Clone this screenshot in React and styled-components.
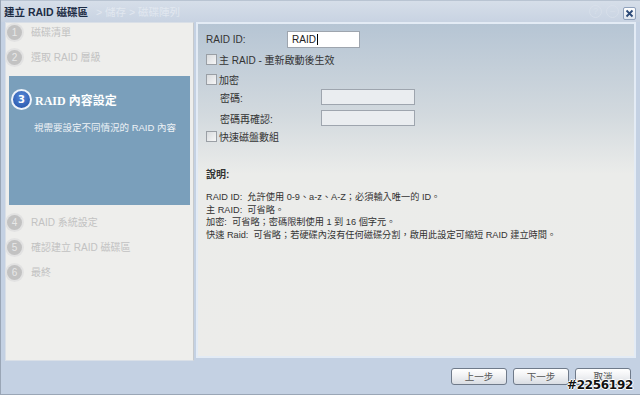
import React from "react";
import styled, { createGlobalStyle } from "styled-components";

const GlobalStyle = createGlobalStyle`
  html, body {
    margin: 0;
    padding: 0;
    background: #c4d1e3;
  }
  body {
    font-family: "Liberation Sans", "Noto Sans CJK TC", sans-serif;
    font-size: 10px;
    color: #333;
  }
`;

const steps = [
  { n: 1, label: "磁碟清單" },
  { n: 2, label: "選取 RAID 層級" },
  { n: 3, label: "RAID 內容設定", desc: "視需要設定不同情況的 RAID 內容", active: true },
  { n: 4, label: "RAID 系統設定" },
  { n: 5, label: "確認建立 RAID 磁碟區" },
  { n: 6, label: "最終" },
];

const notes = [
  "RAID ID:  允許使用 0-9、a-z、A-Z；必須輸入唯一的 ID。",
  "主 RAID:  可省略。",
  "加密:  可省略；密碼限制使用 1 到 16 個字元。",
  "快速 Raid:  可省略；若硬碟內沒有任何磁碟分割，啟用此設定可縮短 RAID 建立時間。",
];

const App = () => {
  return (
    <>
      <GlobalStyle />
      <Window>
        <TitleBar>
          <Title>建立 RAID 磁碟區</Title>
          <Ghost>&gt; 儲存 &gt; 磁碟陣列</Ghost>
          <TitleTools>
            <GhostIcon>?</GhostIcon>
            <GhostIcon>–</GhostIcon>
            <CloseButton>
              <svg width="9" height="9" viewBox="0 0 9 9">
                <path d="M1.5 1.5 L7.5 7.5 M7.5 1.5 L1.5 7.5" stroke="#2c4a78" strokeWidth="1.8" />
              </svg>
            </CloseButton>
          </TitleTools>
        </TitleBar>

        <Body>
          <StepPanel>
            {steps.map((s) =>
              s.active ? (
                <ActiveStep key={s.n}>
                  <ActiveHead>
                    <ActiveBadge>{s.n}</ActiveBadge>
                    <ActiveLabel>{s.label}</ActiveLabel>
                  </ActiveHead>
                  <ActiveDesc>{s.desc}</ActiveDesc>
                </ActiveStep>
              ) : (
                <StepRow key={s.n}>
                  <Badge>{s.n}</Badge>
                  <StepLabel>{s.label}</StepLabel>
                </StepRow>
              )
            )}
          </StepPanel>

          <ContentPanel>
            <FieldRow>
              <Label $width={81}>RAID ID:</Label>
              <TextBox $width={73} $height={17} $white>
                RAID<Caret />
              </TextBox>
            </FieldRow>
            <CheckRow>
              <Check />
              <span>主 RAID - 重新啟動後生效</span>
            </CheckRow>
            <CheckRow>
              <Check />
              <span>加密</span>
            </CheckRow>
            <FieldRow $indent={14} $top={1}>
              <Label $width={101}>密碼:</Label>
              <TextBox $width={94} $height={16} />
            </FieldRow>
            <FieldRow $indent={14} $top={5}>
              <Label $width={101}>密碼再確認:</Label>
              <TextBox $width={94} $height={16} />
            </FieldRow>
            <CheckRow $top={2}>
              <Check />
              <span>快速磁盤數組</span>
            </CheckRow>

            <NoteTitle>說明:</NoteTitle>
            <Notes>
              {notes.map((line) => (
                <NoteLine key={line}>{line}</NoteLine>
              ))}
            </Notes>
          </ContentPanel>
        </Body>

        <Footer>
          <Button>上一步</Button>
          <Button>下一步</Button>
          <Button>取消</Button>
        </Footer>
        <Watermark>#2256192</Watermark>
      </Window>
    </>
  );
};

const Window = styled.div`
  position: relative;
  width: 640px;
  height: 395px;
  box-sizing: border-box;
  display: flex;
  flex-direction: column;
  background: #c4d1e3;
  border-left: 1px solid #9aa6b6;
  border-bottom: 1px solid #9aa6b6;
  overflow: hidden;
`;

const TitleBar = styled.div`
  height: 22px;
  flex: none;
  display: flex;
  align-items: center;
  padding: 0 4px 0 3px;
  background: linear-gradient(#d6dee9, #c8d3e2);
  border-top: 1px solid #b9c4d2;
  box-sizing: border-box;
`;

const Title = styled.div`
  font-weight: bold;
  font-size: 10.5px;
  color: #1d2c44;
  white-space: nowrap;
`;

const Ghost = styled.div`
  margin-left: 8px;
  font-size: 10.5px;
  color: #eef2f7;
  opacity: 0.6;
  white-space: nowrap;
`;

const TitleTools = styled.div`
  margin-left: auto;
  display: flex;
  align-items: center;
  gap: 4px;
`;

const GhostIcon = styled.div`
  width: 11px;
  height: 11px;
  border-radius: 50%;
  border: 1px solid #dbe2ec;
  color: #dbe2ec;
  font-size: 9px;
  line-height: 11px;
  text-align: center;
  opacity: 0.7;
`;

const CloseButton = styled.div`
  width: 11px;
  height: 11px;
  display: flex;
  align-items: center;
  justify-content: center;
  background: linear-gradient(#ffffff, #dfe6ef);
  border: 1px solid #8fa1bb;
  border-radius: 2px;
  margin-top: 4px;
`;

const Body = styled.div`
  height: 339px;
  flex: none;
  display: flex;
  align-items: flex-start;
  gap: 2px;
  padding: 0 3px 0 4px;
`;

const StepPanel = styled.div`
  width: 189px;
  height: 339px;
  box-sizing: border-box;
  background: #eeeeec;
  border: 1px solid #d9dfe7;
  border-right-color: #c6c9cc;
  display: flex;
  flex-direction: column;
`;

const StepRow = styled.div`
  height: 25px;
  flex: none;
  display: flex;
  align-items: flex-start;
  padding: 2px 0 0 1px;
  box-sizing: border-box;
  &:nth-child(4) {
    margin-top: 8px;
  }
`;

const Badge = styled.div`
  width: 15px;
  height: 15px;
  flex: none;
  border-radius: 50%;
  background: #c2c2c2;
  box-shadow: 0 0 0 2px #e2e2e2;
  color: #e8e8e8;
  font-size: 10px;
  line-height: 15px;
  text-align: center;
`;

const StepLabel = styled.div`
  margin-left: 9px;
  line-height: 15px;
  color: #c2c2c2;
  white-space: nowrap;
`;

const ActiveStep = styled.div`
  height: 129px;
  flex: none;
  margin: 3px 3px 0;
  background: #7a9fbb;
  box-sizing: border-box;
  padding: 13px 0 0 2px;
`;

const ActiveHead = styled.div`
  display: flex;
  align-items: center;
`;

const ActiveBadge = styled.div`
  width: 17px;
  height: 17px;
  border-radius: 50%;
  background: radial-gradient(circle at 50% 35%, #5a8ad8, #1f4fa6);
  border: 2px solid #eef3fa;
  color: #fff;
  font-weight: bold;
  font-size: 10px;
  line-height: 17px;
  text-align: center;
  font-family: "DejaVu Sans", sans-serif;
`;

const ActiveLabel = styled.div`
  margin-left: 3px;
  color: #fff;
  font-weight: bold;
  font-size: 12px;
  font-family: "Liberation Serif", "Noto Sans CJK TC", serif;
  white-space: nowrap;
`;

const ActiveDesc = styled.div`
  margin: 10px 0 0 23px;
  color: #eef2f6;
  font-size: 9.5px;
  white-space: nowrap;
`;

const ContentPanel = styled.div`
  width: 440px;
  height: 336px;
  box-sizing: border-box;
  border: 2px solid #e3ebf5;
  background: linear-gradient(#b6c5d4 0px, #d2d9de 90px, #ebecea 150px, #ececea 100%);
  padding: 7px 10px 0 8px;
  display: flex;
  flex-direction: column;
`;

const FieldRow = styled.div`
  display: flex;
  align-items: center;
  padding-left: ${({ $indent }) => $indent || 0}px;
  margin-top: ${({ $top }) => $top || 0}px;
`;

const Label = styled.div`
  width: ${({ $width }) => $width}px;
  flex: none;
  color: #333;
`;

const TextBox = styled.div`
  width: ${({ $width }) => $width}px;
  height: ${({ $height }) => $height}px;
  box-sizing: border-box;
  border: 1px solid #9ea5ae;
  background: ${({ $white }) => ($white ? "#ffffff" : "#eaedf0")};
  padding: 0 4px;
  font-size: 10px;
  color: #222;
  display: flex;
  align-items: center;
`;

const Caret = styled.span`
  display: inline-block;
  width: 1px;
  height: 11px;
  background: #000;
  margin-left: 1px;
`;

const CheckRow = styled.div`
  height: 17px;
  display: flex;
  align-items: center;
  gap: 2px;
  margin-top: ${({ $top }) => $top || 3}px;
  color: #333;
  white-space: nowrap;
`;

const Check = styled.div`
  width: 11px;
  height: 11px;
  box-sizing: border-box;
  border: 1px solid #9a9fa5;
  background: linear-gradient(135deg, #d8dbde, #f6f6f6);
`;

const NoteTitle = styled.div`
  margin-top: 21px;
  font-weight: bold;
  color: #333;
`;

const Notes = styled.div`
  margin-top: 10px;
  display: flex;
  flex-direction: column;
`;

const NoteLine = styled.div`
  height: 12.7px;
  line-height: 12.7px;
  white-space: pre;
  color: #333;
  font-size: 9.2px;
`;

const Footer = styled.div`
  flex: 1;
  display: flex;
  justify-content: flex-end;
  align-items: flex-start;
  gap: 6px;
  padding: 7px 9px 0 0;
`;

const Button = styled.div`
  width: 56px;
  height: 17px;
  box-sizing: border-box;
  border: 1px solid #6f7a8a;
  border-radius: 3px;
  background: linear-gradient(#ffffff, #f1f2f4 45%, #d9dde3);
  color: #555;
  font-size: 9.5px;
  line-height: 15px;
  text-align: center;
`;

const Watermark = styled.div`
  position: absolute;
  right: 7px;
  bottom: 2px;
  font-family: "DejaVu Sans", sans-serif;
  font-weight: bold;
  font-size: 12px;
  color: #111;
  letter-spacing: -0.3px;
  text-shadow: 1px 0 0 #fff, -1px 0 0 #fff, 0 1px 0 #fff, 0 -1px 0 #fff;
`;

export default App;
